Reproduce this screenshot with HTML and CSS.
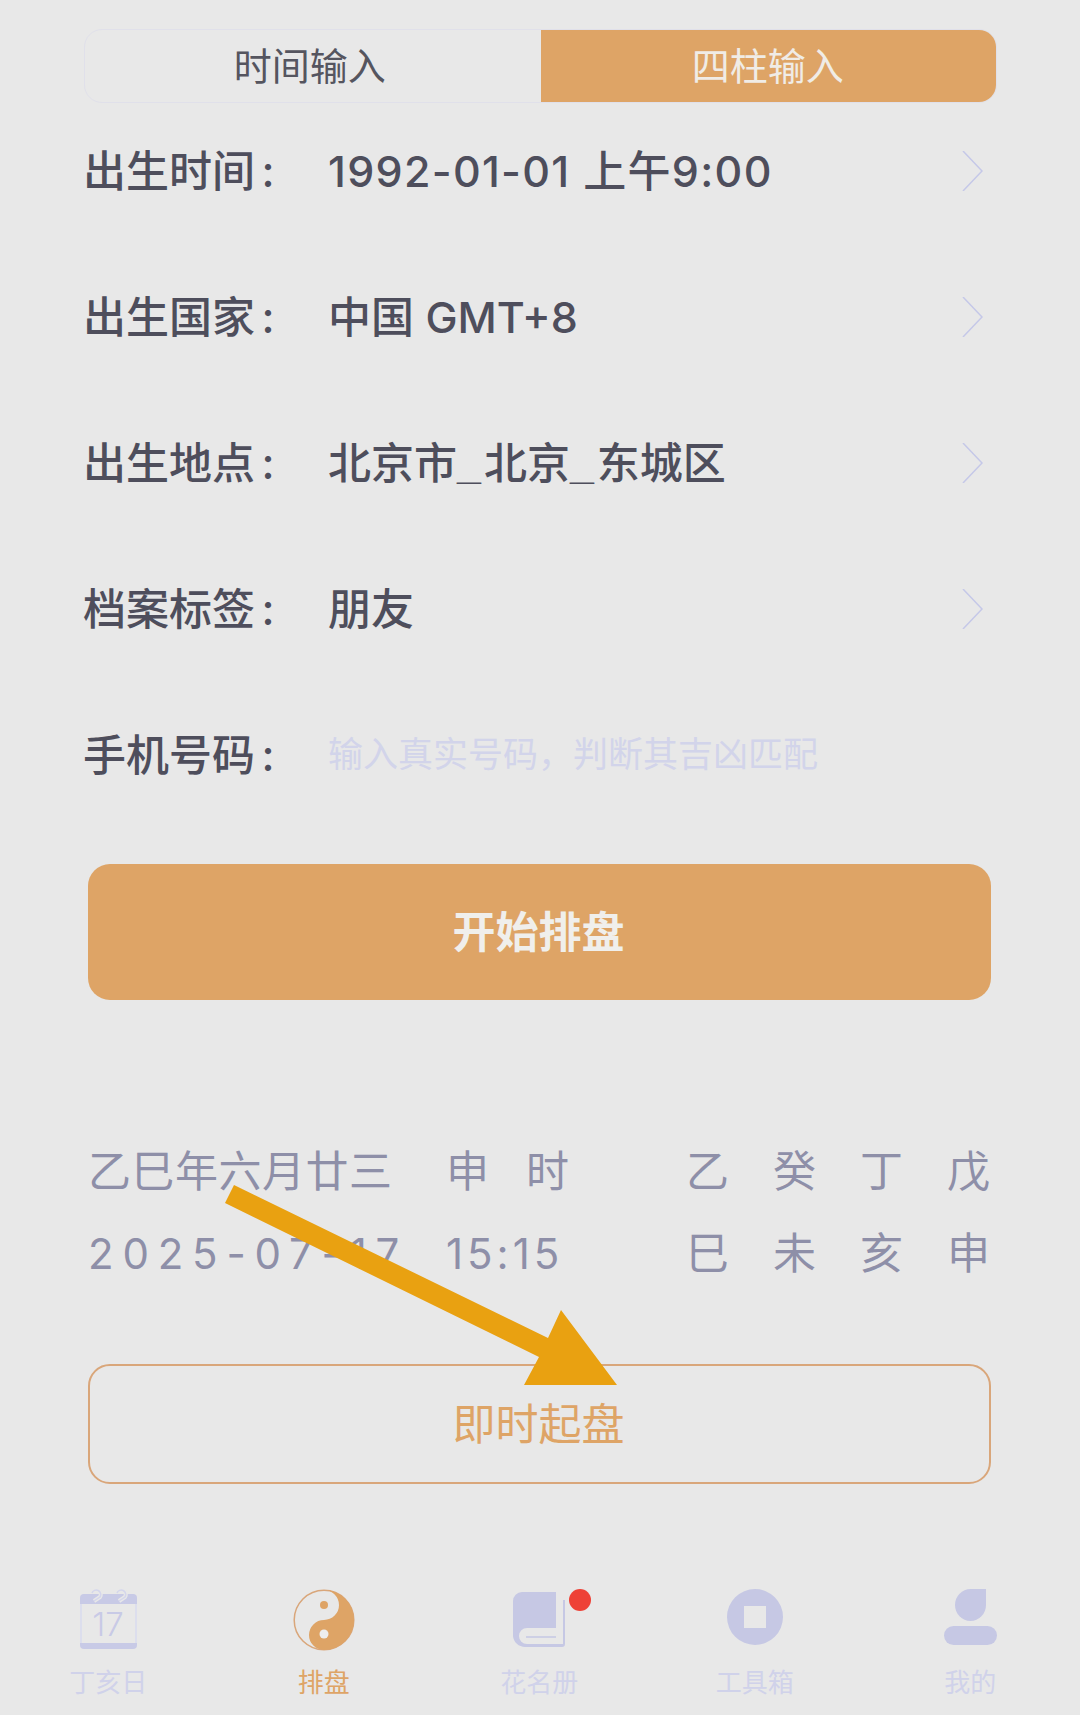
FILE: index.html
```html
<!DOCTYPE html>
<html lang="zh-CN">
<head>
  <meta charset="utf-8">
  <title>排盘</title>
  <link rel="stylesheet" href="styles.css">
</head>
<body>
  <div class="page">
    <div class="tabs">
      <div class="tab">时间输入</div>
      <div class="tab active">四柱输入</div>
    </div>

    <div class="form">
      <div class="row">
        <span class="label">出生时间 :</span>
        <span class="value datetime">1992-01-01 上午9:00</span>
        <svg class="chevron" viewBox="0 0 21 40"><path d="M1 0 L20 20 L1 40"/></svg>
      </div>
      <div class="row">
        <span class="label">出生国家 :</span>
        <span class="value">中国 GMT+8</span>
        <svg class="chevron" viewBox="0 0 21 40"><path d="M1 0 L20 20 L1 40"/></svg>
      </div>
      <div class="row">
        <span class="label">出生地点 :</span>
        <span class="value">北京市<span class="us">_</span>北京<span class="us">_</span>东城区</span>
        <svg class="chevron" viewBox="0 0 21 40"><path d="M1 0 L20 20 L1 40"/></svg>
      </div>
      <div class="row">
        <span class="label">档案标签 :</span>
        <span class="value">朋友</span>
        <svg class="chevron" viewBox="0 0 21 40"><path d="M1 0 L20 20 L1 40"/></svg>
      </div>
      <div class="row">
        <span class="label">手机号码 :</span>
        <span class="placeholder">输入真实号码，判断其吉凶匹配</span>
      </div>
    </div>

    <button class="btn-start">开始排盘</button>

    <div class="today">
      <div class="lunar">乙巳年六月廿三</div>
      <div class="shichen">申时</div>
      <div class="pillars"><span>乙</span><span>癸</span><span>丁</span><span>戊</span></div>
      <div class="solar">2025-07-17</div>
      <div class="clock">15:15</div>
      <div class="pillars"><span>巳</span><span>未</span><span>亥</span><span>申</span></div>
    </div>

    <button class="btn-now">即时起盘</button>

    <nav class="tabbar">
      <div class="item">
        <div class="icon">
          <svg width="57" height="60" viewBox="0 0 57 60">
            <rect x="1" y="6" width="55" height="53" rx="4" fill="none" stroke="#d8daee" stroke-width="1.5"/>
            <path d="M0 15 V9 a4 4 0 0 1 4 -4 H53 a4 4 0 0 1 4 4 V15 Z" fill="#c8cae6"/>
            <path d="M0 54 H57 V56 a4 4 0 0 1 -4 4 H4 a4 4 0 0 1 -4 -4 Z" fill="#c8cae6"/>
            <path class="ring-gap" d="M12 4 a4.500 4.500 0 1 1 8 4 L14 12 M37 4 a4.500 4.500 0 1 1 8 4 L39 12"/>
            <path class="ring" d="M12 4 a4.500 4.500 0 1 1 8 4 L14 12 M37 4 a4.500 4.500 0 1 1 8 4 L39 12"/>
            <text class="cal-num" x="28" y="47">17</text>
          </svg>
        </div>
        <span>丁亥日</span>
      </div>
      <div class="item on">
        <div class="icon">
          <svg width="62" height="62" viewBox="0 0 62 62">
            <circle cx="31" cy="31" r="29.800" fill="none" stroke="#d9a67a" stroke-width="1.500"/>
            <path d="M31 1 A30 30 0 0 1 31 61 A15 15 0 0 1 31 31 A15 15 0 0 0 31 1 Z" fill="#dea466"/>
            <circle cx="31" cy="16" r="4" fill="#dea466"/>
            <circle cx="31" cy="45" r="4.500" fill="#eeeeee"/>
          </svg>
        </div>
        <span>排盘</span>
      </div>
      <div class="item">
        <div class="icon">
          <svg class="book" width="52" height="56" viewBox="0 0 52 56">
            <path d="M9 0 H43 V36 H14 A8 8 0 0 0 14 52 H50 V8 H52 V52 a3 3 0 0 1 -3 3 H12 A12 12 0 0 1 0 44 V9 A9 9 0 0 1 9 0 Z" fill="#c6c8e4"/>
            <path d="M13 45 H43" stroke="#c6c8e4" stroke-width="1.500"/>
          </svg>
          <i class="badge"></i>
        </div>
        <span>花名册</span>
      </div>
      <div class="item">
        <div class="icon">
          <svg width="56" height="56" viewBox="0 0 56 56">
            <path fill-rule="evenodd" d="M28 0 A28 28 0 1 1 28 56 A28 28 0 1 1 28 0 Z M17 17 V39 H39 V17 Z" fill="#c6c8e4"/>
          </svg>
        </div>
        <span>工具箱</span>
      </div>
      <div class="item">
        <div class="icon">
          <svg width="53" height="56" viewBox="0 0 53 56">
            <path d="M42 0 V16 A15.500 16 0 1 1 26.500 0 Z" fill="#c6c8e4"/>
            <rect x="0" y="37" width="53" height="19" rx="9.500" fill="#c6c8e4"/>
          </svg>
        </div>
        <span>我的</span>
      </div>
    </nav>

    <svg class="arrow" width="400" height="210" viewBox="220 1180 400 210">
      <polygon points="234,1185 225,1203 539,1357 524,1385 617,1385 561,1310 548,1338" fill="#e9a111"/>
    </svg>
  </div>
</body>
</html>
```

FILE: styles.css
```css
* {
  box-sizing: border-box;
}
body {
  margin: 0;
  background-color: #e8e8e8;
  font-family: Inter, "Noto Sans CJK SC", sans-serif;
}
.page {
  position: relative;
  width: 1080px;
  height: 1715px;
  padding-top: 29px;
  overflow: hidden;
}

.tabs {
  display: flex;
  height: 74px;
  margin: 0 83px 0 84px;
  border-radius: 18px;
  overflow: hidden;
  border: 1px solid #e0e0ea;
  font-size: 38px;
  color: #55555f;
}
.tab {
  flex: 0 0 50%;
  display: flex;
  justify-content: center;
  align-items: center;
  padding: 0 6px 6px 0;
}
.tab.active {
  flex: 0 0 calc(50% + 1px);
  margin: -1px -1px -1px 0;
  padding: 0 2px 6px 0;
  background-color: #dea466;
  color: #f0ece6;
}

.form {
  display: flex;
  flex-direction: column;
  gap: 26px;
  margin-top: 8px;
  padding: 0 97px 0 83px;
}
.row {
  display: flex;
  align-items: center;
  height: 120px;
  font-size: 43px;
  font-weight: 500;
  color: #4e4e5c;
}
.label {
  width: 245px;
  flex-shrink: 0;
  padding-bottom: 7px;
  word-spacing: -5px;
}
.value {
  flex: 1;
  padding-bottom: 7px;
}
.datetime {
  letter-spacing: 1.3px;
}
.us {
  font-family: "Liberation Sans", sans-serif;
  font-weight: 700;
  letter-spacing: 3px;
}
.placeholder {
  padding-bottom: 7px;
  font-size: 35px;
  font-weight: 400;
  color: #d2d4ea;
}
.chevron {
  width: 21px;
  height: 40px;
  flex-shrink: 0;
}
.chevron path {
  fill: none;
  stroke: #c5c8e8;
  stroke-width: 1.5;
}

.btn-start, .btn-now {
  display: block;
  width: 903px;
  margin-left: 88px;
  border-radius: 22px;
  padding: 0 2px 6px 0;
  font-family: inherit;
  font-size: 43px;
}
.btn-start {
  height: 136px;
  margin-top: 49px;
  border: none;
  background-color: #dea466;
  color: #f0efec;
  font-weight: 700;
}
.btn-now {
  height: 120px;
  margin-top: 73px;
  border: 2px solid #d9a67a;
  background: none;
  color: #dea466;
}

.today {
  display: grid;
  grid-template-columns: 358px 240px auto;
  grid-auto-rows: 82px;
  align-items: center;
  margin-top: 127px;
  padding-left: 88px;
  font-size: 43px;
  color: #8e8fa8;
}
.lunar {
  letter-spacing: 0.5px;
}
.shichen {
  letter-spacing: 37px;
}
.solar {
  padding-top: 6px;
  font-size: 42px;
  letter-spacing: 8.8px;
}
.clock {
  padding-top: 6px;
  font-size: 42px;
  letter-spacing: 4px;
}
.pillars {
  display: flex;
  gap: 44px;
}

.tabbar {
  display: flex;
  margin-top: 105px;
  padding-left: 0.5px;
}
.item {
  width: 215.5px;
  display: flex;
  flex-direction: column;
  align-items: center;
  font-size: 26px;
  line-height: 30px;
  color: #d0d2ea;
}
.item.on {
  color: #dea466;
}
.icon {
  position: relative;
  height: 60px;
  margin-bottom: 19px;
}
.icon svg {
  display: block;
}
.book {
  margin-top: 3px;
}
.badge {
  position: absolute;
  left: 56px;
  top: 0;
  width: 22px;
  height: 22px;
  border-radius: 50%;
  background-color: #ee4136;
}
.ring, .ring-gap {
  fill: none;
}
.ring {
  stroke: #d4d6ec;
  stroke-width: 1.5;
}
.ring-gap {
  stroke: #e8e8e8;
  stroke-width: 4;
}
.cal-num {
  font-size: 33px;
  font-weight: 300;
  fill: #c8cae6;
  text-anchor: middle;
}

.arrow {
  position: absolute;
  left: 220px;
  top: 1180px;
}
```
